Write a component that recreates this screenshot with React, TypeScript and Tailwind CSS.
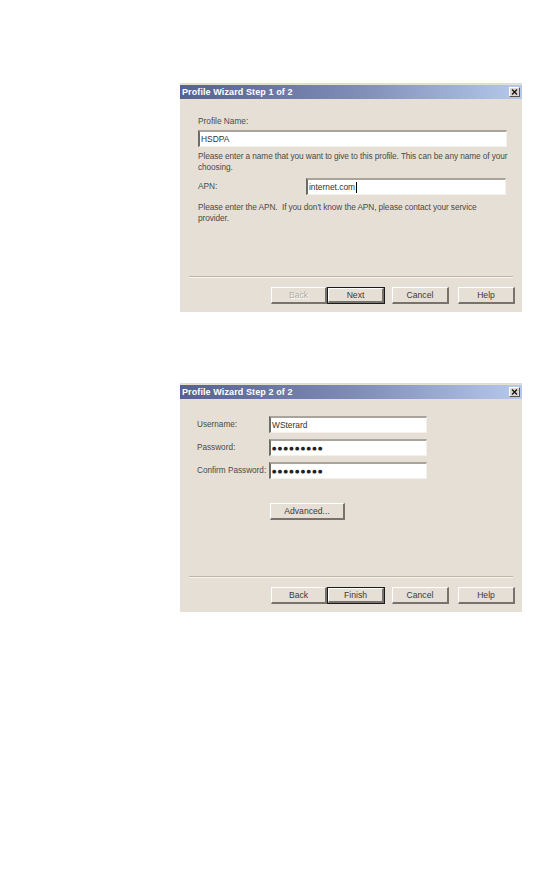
import { ReactNode } from 'react';

const font = { fontFamily: '"Liberation Sans", Arial, sans-serif' };

function TitleBar({ title }: { title: string }) {
  return (
    <div className="h-[14px] flex items-center justify-between bg-gradient-to-r from-[#56618f] via-[#7d8bb5] to-[#b6c9ec] pl-[2px] pr-[2px]">
      <span className="text-[9px] font-bold text-white leading-none tracking-[0.1px]">{title}</span>
      <div className="w-[11px] h-[10px] bg-[#dcd7cf] border-t border-l border-t-white border-l-white border-r border-b border-r-[#55524d] border-b-[#55524d] flex items-center justify-center">
        <svg width="7" height="6" viewBox="0 0 7 6">
          <path d="M1 0.5 L6 5.5 M6 0.5 L1 5.5" stroke="#111" strokeWidth="1.3" />
        </svg>
      </div>
    </div>
  );
}

function Input({ value, className = '', caret = false, mask = false }: { value: string; className?: string; caret?: boolean; mask?: boolean }) {
  return (
    <div
      className={`h-[17px] shrink-0 bg-white border-t-2 border-l-2 border-t-[#a8a49c] border-l-[#6f6b65] border-r border-b border-r-[#f3f1ec] border-b-[#f3f1ec] flex items-center pl-[1px] ${className}`}
    >
      {mask ? (
        <span className="text-[5px] text-[#222] tracking-[1.4px] leading-none" style={{ fontFamily: '"DejaVu Sans", sans-serif' }}>
          {value}
        </span>
      ) : (
        <span className="text-[8.4px] text-[#333] leading-none">{value}</span>
      )}
      {caret && <span className="w-px h-[11px] bg-black ml-px" />}
    </div>
  );
}

function Button({ children, isDefault = false, disabled = false, className = '' }: { children: ReactNode; isDefault?: boolean; disabled?: boolean; className?: string }) {
  const inner = (
    <div className="h-full bg-[#e6dfd5] border-t border-l border-t-white border-l-white border-r-2 border-b-2 border-r-[#77726b] border-b-[#77726b] flex items-center justify-center">
      <span className={`text-[8.6px] leading-none ${disabled ? 'text-[#b0aba3] [text-shadow:1px_1px_0_#fff]' : 'text-[#3a3a3a]'}`}>{children}</span>
    </div>
  );
  if (isDefault) {
    return <div className={`h-[17px] border border-[#1b1b1b] ${className}`}>{inner}</div>;
  }
  return <div className={`h-[17px] ${className}`}>{inner}</div>;
}

function Footer({ back, next, backDisabled }: { back: string; next: string; backDisabled?: boolean }) {
  return (
    <div className="flex flex-col">
      <div className="mx-[9px] h-px bg-[#bdb6ab]" />
      <div className="mx-[9px] h-px bg-[#f7f4ef]" />
      <div className="flex mt-[9px] pl-[91px]">
        <Button disabled={backDisabled} className="w-[56px]">{back}</Button>
        <Button isDefault className="w-[58px]">{next}</Button>
        <Button className="w-[57px] ml-[7px]">Cancel</Button>
        <Button className="w-[57px] ml-[9px]">Help</Button>
      </div>
      <div className="h-[8px]" />
    </div>
  );
}

function Dialog({ title, children, footer }: { title: string; children: ReactNode; footer: ReactNode }) {
  return (
    <div className="w-[342px] h-[229px] bg-[#e6dfd5] border-t border-[#dcdcdc] pt-px flex flex-col">
      <TitleBar title={title} />
      <div className="flex-1">{children}</div>
      {footer}
    </div>
  );
}

export default function App() {
  return (
    <div className="w-[552px] h-[870px] bg-white pt-[83px] pl-[180px] flex flex-col gap-[71px]" style={font}>
      <Dialog title="Profile Wizard Step 1 of 2" footer={<Footer back="Back" next="Next" backDisabled />}>
        <div className="pl-[18px] pr-[2px] text-[8.3px] leading-[11px] text-[#4a4a4a]">
          <div className="mt-[17px]">Profile Name:</div>
          <Input value="HSDPA" className="mt-[3px] w-[309px]" />
          <p className="mt-[4px] tracking-[-0.1px]">
            Please enter a name that you want to give to this profile. This can be any name of your choosing.
          </p>
          <div className="mt-[5px] flex items-center">
            <span className="w-[108px]">APN:</span>
            <Input value="internet.com" caret className="w-[200px]" />
          </div>
          <p className="mt-[7px] pr-[20px] tracking-[-0.1px]">
            Please enter the APN.&nbsp; If you don't know the APN, please contact your service provider.
          </p>
        </div>
      </Dialog>

      <Dialog title="Profile Wizard Step 2 of 2" footer={<Footer back="Back" next="Finish" />}>
        <div className="pl-[17px] text-[8.2px] leading-[11px] text-[#4a4a4a] flex flex-col">
          <div className="mt-[17px] flex items-center">
            <span className="w-[72px] shrink-0">Username:</span>
            <Input value="WSterard" className="w-[158px]" />
          </div>
          <div className="mt-[6px] flex items-center">
            <span className="w-[72px] shrink-0">Password:</span>
            <Input value="●●●●●●●●●" mask className="w-[158px]" />
          </div>
          <div className="mt-[6px] flex items-center">
            <span className="w-[72px] shrink-0 whitespace-nowrap">Confirm Password:</span>
            <Input value="●●●●●●●●●" mask className="w-[158px]" />
          </div>
          <div className="mt-[24px] pl-[73px]">
            <Button className="w-[75px]">Advanced...</Button>
          </div>
        </div>
      </Dialog>
    </div>
  );
}
